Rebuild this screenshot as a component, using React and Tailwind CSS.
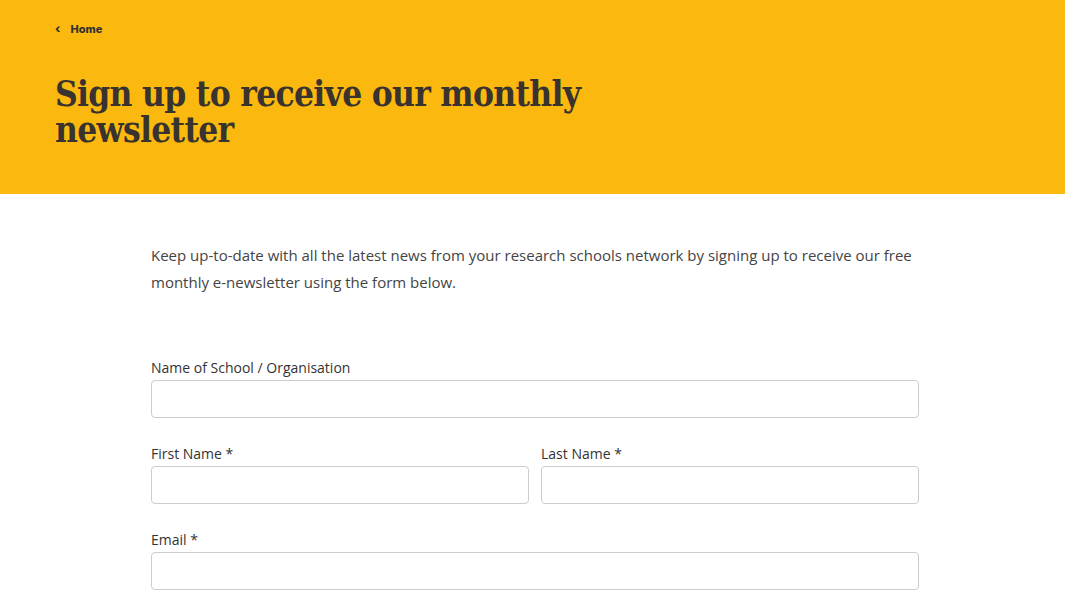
export default function App() {
  return (
    <div className="min-h-screen bg-white font-['Open_Sans',sans-serif] text-[#333]">
      <header className="h-[194px] bg-[#fbb80f] px-[55px] pt-[20px]">
        <a className="flex items-center gap-[10px] text-[11px] font-extrabold text-[#333] font-['Inter',sans-serif]">
          <span className="text-[12px]">‹</span>
          <span>Home</span>
        </a>
        <h1 className="mt-[38px] w-[600px] font-['DejaVu_Serif',serif] [font-stretch:condensed] text-[35px] leading-[36px] font-bold text-[#38332e] tracking-[-0.7px]">
          Sign up to receive our monthly newsletter
        </h1>
      </header>
      <main className="w-[768px] pt-[48px] ml-[151px]">
        <p className="text-[15px] leading-[27px] text-[#444]">
          Keep up-to-date with all the latest news from your research schools network by signing up to receive our free monthly e-newsletter using the form below.
        </p>
        <form className="mt-[62px] flex flex-col gap-[26px]">
          <Field label="Name of School / Organisation" />
          <div className="grid grid-cols-2 gap-[12px]">
            <Field label="First Name *" />
            <Field label="Last Name *" />
          </div>
          <Field label="Email *" />
        </form>
      </main>
    </div>
  );
}

function Field({ label }) {
  return (
    <label className="flex flex-col">
      <span className="text-[14px] leading-[20px] text-[#333]">{label}</span>
      <input className="mt-[2px] h-[38px] w-full rounded-[4px] border border-[#ccc] bg-white px-3 outline-none" />
    </label>
  );
}
